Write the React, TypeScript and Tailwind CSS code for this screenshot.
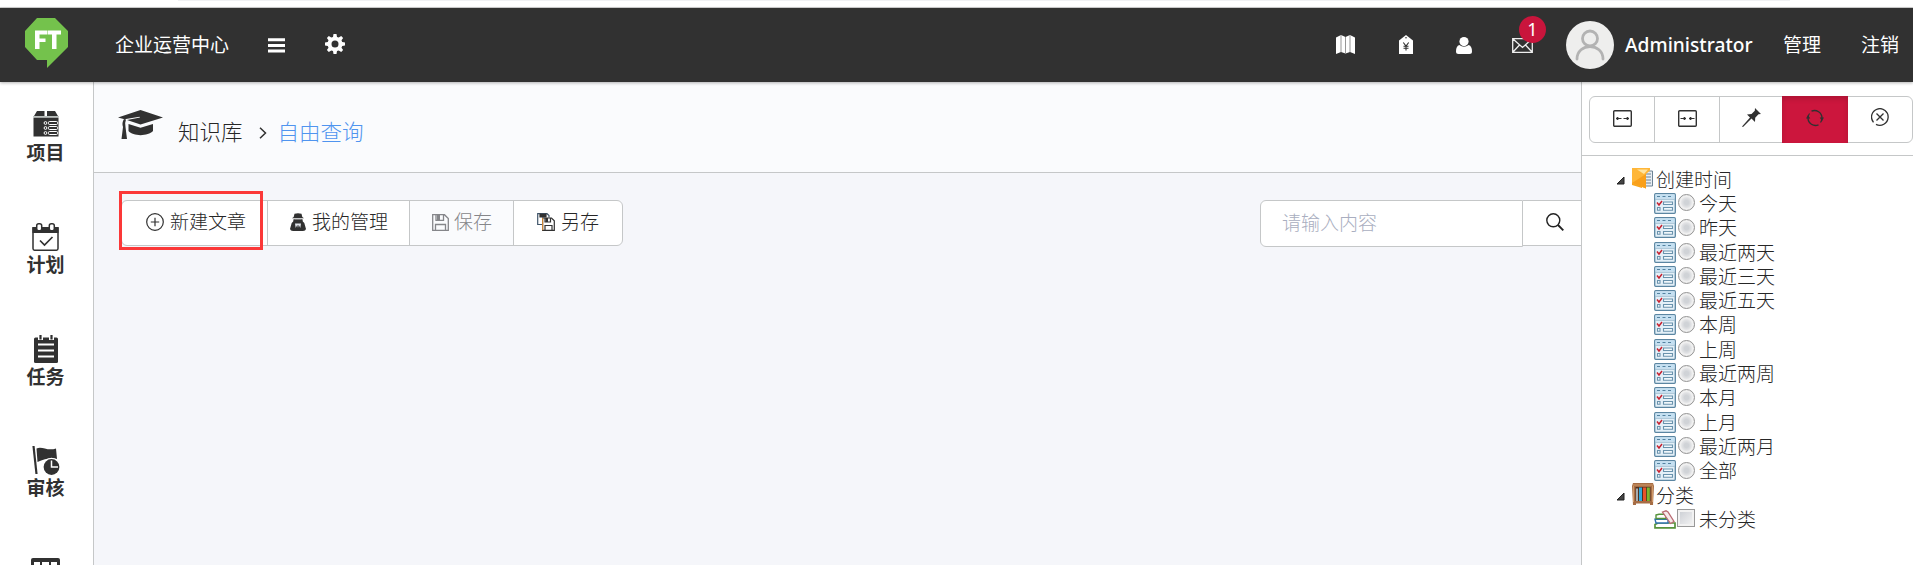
import React from 'react';

const Logo = () => (
  <svg className="h-[50px] w-[43px]" viewBox="0 0 43 50">
    <path d="M12 0H30L43 13V29L30 42L22 50V42H12L0 29V13Z" fill="#74c24c" />
    <path d="M10 12.500H22V16.500H14.500V20.500H20.500V24H14.500V31H10Z M22.500 12.500H36V16.500H31.500V31H27V16.500H22.500Z" fill="#fff" />
  </svg>
);

const Menu = () => (
  <svg className="h-[15px] w-[17px]" viewBox="0 0 17 15" stroke="#fff" strokeWidth="3">
    <path d="M0 1.700H17M0 7.400H17M0 13.100H17" />
  </svg>
);

const Gear = () => (
  <svg className="size-[20px]" viewBox="0 0 20 20">
    <path
      fill="#fff"
      fillRule="evenodd"
      d="M8.500 0H11.500L12 2.900L13.700 3.600L16.200 2L18.100 3.900L16.500 6.300L17.200 8L20 8.500V11.500L17.200 12L16.500 13.700L18.100 16.100L16.200 18L13.700 16.400L12 17.100L11.500 20H8.500L8 17.100L6.300 16.400L3.800 18L1.900 16.100L3.500 13.700L2.800 12L0 11.500V8.500L2.800 8L3.500 6.300L1.900 3.900L3.800 2L6.300 3.600L8 2.900ZM10 6.500A3.500 3.500 0 1 0 10 13.500A3.500 3.500 0 1 0 10 6.500Z"
    />
  </svg>
);

const MapIcon = () => (
  <svg className="h-[19px] w-[19px]" viewBox="0 0 19 19">
    <path d="M0 2.500L5 0L9.500 2L14 0L19 2.500V19L14 17L9.500 18.500L5 17L0 19Z" fill="#fff" />
    <path d="M5 0V17M9.500 2V18.500M14 0V17" stroke="#8a8a8a" strokeWidth=".9" />
  </svg>
);

const Tag = () => (
  <svg className="h-[19px] w-[14px]" viewBox="0 0 14 19">
    <path d="M7 0L14 5.500V19H0V5.500Z" fill="#fff" />
    <circle cx="7" cy="2.800" r="0.800" fill="#313131" />
    <path d="M4.300 7.500L7 11L9.700 7.500M7 11V15.500M4.500 11.300H9.500M4.500 13.300H9.500" fill="none" stroke="#313131" strokeWidth="1.100" />
  </svg>
);

const User = () => (
  <svg className="h-[17px] w-[16px]" viewBox="0 0 16 17" fill="#fff">
    <circle cx="8" cy="4.600" r="4.600" />
    <path d="M3.300 8Q8 11.500 12.700 8Q16 9 16 14.500Q16 17 13.500 17H2.500Q0 17 0 14.500Q0 9 3.300 8Z" />
  </svg>
);

const Mail = () => (
  <svg className="h-[15px] w-[21px]" viewBox="0 0 21 15" fill="none" stroke="#eee" strokeWidth="1.300">
    <path d="M.7.700H20.300V14.300H.700ZM1 1L10.500 9.500L20 1M1 14L7.500 7M20 14L13.500 7" />
  </svg>
);

const Avatar = () => (
  <svg className="size-[48px]" viewBox="0 0 48 48">
    <circle cx="24" cy="24" r="24" fill="#eeeeed" />
    <g fill="none" stroke="#b3b3b3" strokeWidth="2.800" strokeLinecap="round">
      <circle cx="24" cy="17.500" r="7.500" />
      <path d="M11 38C11 21.500 37 21.500 37 38" />
    </g>
  </svg>
);

const ProjectIcon = () => (
  <svg className="h-[26px] w-[26px]" viewBox="0 0 26 26">
    <path d="M4 0H11.500V5H1ZM14 0H22L25 5H14ZM.500 6.500H25.500V25.500H.500Z" fill="#313131" />
    <path d="M0 5.700H26" stroke="#b9bfbc" strokeWidth="1.300" />
    <g fill="none" stroke="#fff" strokeWidth="1">
      <rect x="15.500" y="10.500" width="9" height="3" rx="1" />
      <rect x="15.500" y="15.500" width="9" height="3" rx="1" />
      <rect x="15.500" y="20.500" width="9" height="3" rx="1" />
      <circle cx="12.500" cy="12" r="1.400" />
      <circle cx="12.500" cy="17" r="1.400" />
      <circle cx="12.500" cy="22" r="1.400" />
    </g>
  </svg>
);

const PlanIcon = () => (
  <svg className="h-[28px] w-[27px]" viewBox="0 0 27 28">
    <path d="M1 5H26V25.500Q26 27.200 24.500 27.200H2.500Q1 27.200 1 25.500Z" fill="#fff" stroke="#313131" strokeWidth="1.500" />
    <path d="M.500 4H26.500V10H.500Z" fill="#313131" />
    <rect x="4.700" y=".800" width="5" height="7" rx="2" fill="#fff" stroke="#313131" strokeWidth="1.500" />
    <rect x="17.300" y=".800" width="5" height="7" rx="2" fill="#fff" stroke="#313131" strokeWidth="1.500" />
    <path d="M8 17.500L12.500 22L20.500 14" fill="none" stroke="#313131" strokeWidth="1.700" />
  </svg>
);

const TaskIcon = () => (
  <svg className="h-[28px] w-[24px]" viewBox="0 0 24 28">
    <path d="M1.500 2.500H22.500Q24 2.500 24 4V26.500Q24 28 22.500 28H1.500Q0 28 0 26.500V4Q0 2.500 1.500 2.500Z" fill="#313131" />
    <path d="M6.500 0V5M17.500 0V5" stroke="#fff" strokeWidth="5" />
    <path d="M6.500 0V4.500M17.500 0V4.500" stroke="#313131" strokeWidth="2.200" />
    <path d="M4 9.500H20M4 15.500H20M4 21.500H20" stroke="#fff" strokeWidth="1.800" />
  </svg>
);

const ReviewIcon = () => (
  <svg className="h-[29px] w-[28px]" viewBox="0 0 28 29">
    <path d="M1.500 0L4.500 28" stroke="#313131" strokeWidth="2.200" />
    <path d="M4.500 2.500C10 -.5 15 5.500 24 2.500L25 13C20 11 12 13 5.500 16Z" fill="#313131" />
    <circle cx="19.500" cy="21" r="9.200" fill="#fff" />
    <circle cx="19.500" cy="21" r="7.900" fill="#313131" />
    <path d="M19.500 14.500V21H26" fill="none" stroke="#fff" strokeWidth="1.500" />
  </svg>
);

const TableIcon = () => (
  <svg className="h-[26px] w-[29px]" viewBox="0 0 29 26">
    <rect width="29" height="26" rx="2" fill="#313131" />
    <path d="M3 4H9V8H3ZM11 4H18V8H11ZM20 4H26V8H20Z" fill="#fff" />
  </svg>
);

const Cap = () => (
  <svg className="h-[30px] w-[45px]" viewBox="0 0 45 30" fill="#313131">
    <path d="M22.500 0L45 7.500L22.500 14.500L9 10L22 7.500L21.500 6.700L6.500 9.300L0 7.500Z" />
    <path d="M10.500 14L22.500 17.800L35 14V21C30 26.500 15 26.500 10.500 21Z" />
    <path d="M6 9L8 9.500Q6.500 13 7.500 17L9 29H3.500L5 17Q3.500 13 6 9Z" />
  </svg>
);

const PlusCircle = () => (
  <svg className="size-[18px]" viewBox="0 0 18 18" fill="none" stroke="#313131" strokeWidth="1.200">
    <circle cx="9" cy="9" r="8.300" />
    <path d="M9 4.800V13.200M4.800 9H13.200" />
  </svg>
);

const Manager = () => (
  <svg className="h-[18px] w-[16px]" viewBox="0 0 16 18">
    <path d="M4.500 .8Q8 -.4 11.500 .8L12.300 4L14 5.200H2L3.700 4ZM3.500 6.300H12.500L12.800 8.500L14.300 10L16 16Q15.500 18 13 18H3Q.500 18 0 16L1.700 10L3.200 8.500Z" fill="#313131" />
    <path d="M5 5.700H11" stroke="#c8cacd" />
    <path d="M5 10.500L11 10.500L10.300 15L8.700 11.800L8 15L7.300 11.800L5.700 15Z" fill="#e4e8ee" />
  </svg>
);

const Save = () => (
  <svg className="size-[17px]" viewBox="0 0 17 17" fill="none" stroke="#85868a" strokeWidth="1.300">
    <path d="M.700.700H12.500L16.300 4.500V16.300H.700ZM4 .7V6.300H11.500V.7M3.500 16V10.500H13.500V16" />
    <path d="M5 1H8V6H5Z" fill="#85868a" stroke="none" />
  </svg>
);

const SaveAs = () => (
  <svg className="size-[18px]" viewBox="0 0 18 18" fill="none" stroke="#313131" strokeWidth="1.200">
    <path d="M5 11.500H.700V.700H10L12 2.500V4.500" stroke="#40556a" />
    <path d="M3 .7V4H9V.7" fill="#313131" />
    <path d="M5.600 5H14.500L17.300 7.800V17.300H5.600Z" fill="#fff" />
    <path d="M5.600 5V17.300" stroke="#c98234" />
    <path d="M8 5V9H13.500V5" />
    <path d="M8.500 5H11V9H8.500Z" fill="#313131" stroke="none" />
    <path d="M8 17V12.500H15V17" />
  </svg>
);

const Search = () => (
  <svg className="size-[18px]" viewBox="0 0 18 18" fill="none" stroke="#222" strokeWidth="1.400">
    <circle cx="7.300" cy="7.300" r="6.500" />
    <path d="M12 12L17.300 17.300" strokeWidth="1.900" />
  </svg>
);

const Spread = ({ inward }: { inward?: boolean }) => (
  <svg className="h-[17px] w-[19px]" viewBox="0 0 19 17" fill="none" stroke="#313131" strokeWidth="1.400">
    <rect x=".7" y=".7" width="17.600" height="15.600" rx="1" />
    {inward ? (
      <path d="M2.500 8.500H7.500M6 7.300L8 8.500L6 9.700ZM16.500 8.500H11.500M13 7.300L11 8.500L13 9.700Z" strokeWidth="1" fill="#313131" />
    ) : (
      <path d="M3.500 8.500H8.500M5 7.300L3 8.500L5 9.700ZM15.500 8.500H10.500M14 7.300L16 8.500L14 9.700Z" strokeWidth="1" fill="#313131" />
    )}
  </svg>
);

const Pin = () => (
  <svg className="size-[19px]" viewBox="0 0 19 19" fill="#313131">
    <path d="M13 0L19 6L16.500 6.300L13.200 9.800L13 14L9.500 10.500L1 19L0 18.500L8 9.500L5 6.500L9.500 6L12.800 2.800Z" />
  </svg>
);

const Refresh = () => (
  <svg className="size-[18px]" viewBox="0 0 18 18">
    <path d="M5.500 2.200A7.500 7.500 0 0 1 16 9M12.500 15.800A7.500 7.500 0 0 1 2 9" fill="none" stroke="#313131" strokeWidth="1.400" />
    <path d="M2 9A7.500 7.500 0 0 1 3.500 4.500M16 9A7.500 7.500 0 0 1 14.500 13.500" fill="none" stroke="#313131" strokeWidth="1.200" />
    <path d="M13.700 8.500H18L16 12ZM0 9.500H4.300L2 6Z" fill="#313131" />
  </svg>
);

const Close = () => (
  <svg className="size-[18px]" viewBox="0 0 18 18" fill="none" stroke="#313131" strokeWidth="1.300">
    <path d="M2.500 14.300A8.300 8.300 0 1 1 5 16.300M5.500 5.500L12.500 12.500M12.500 5.500L5.500 12.500" />
  </svg>
);

const Folder = () => (
  <svg className="h-[21px] w-[21px]" viewBox="0 0 21 21">
    <path d="M0 0H17V4H21V18H10V20L0 17Z" fill="#f7a51d" />
    <path d="M12 3H20.500V18H12Z" fill="#e8edf2" stroke="#6d8394" />
    <path d="M14 6H19M14 9H19M14 12H19M14 15H19" stroke="#6d8394" />
    <path d="M0 0H18V2.500L14 6V20.500L0 15Z" fill="#ffb638" />
    <path d="M0 15L14 6V20.500Z" fill="#f9a01b" />
    <path d="M5 1.500H16L12 6Z" fill="#ffe3a0" />
  </svg>
);

const FormIcon = () => (
  <svg className="h-[21px] w-[22px]" viewBox="0 0 22 21">
    <rect x=".7" y=".7" width="20.600" height="19.600" rx="1" fill="#e4f0f8" stroke="#5b86a2" strokeWidth="1.300" />
    <path d="M1.400 1.400H20.600V5.500H1.400Z" fill="#c4e0f2" />
    <path d="M3 3.500H6M8.500 3.500H11.500M14 3.500H17" stroke="#55829f" strokeWidth="1.200" />
    <path d="M1.400 6.300H20.600" stroke="#8fb2c8" strokeWidth=".8" />
    <path d="M9.500 9H18.500V11.500H9.500ZM9.500 14.500H18.500V17.300H9.500ZM3.500 14.500H6V17.300H3.500Z" fill="#f2f8fc" stroke="#6a93ad" strokeWidth="1.100" />
    <path d="M3 9.500L5 12L8 8" fill="none" stroke="#c8202f" strokeWidth="1.500" />
  </svg>
);

const Bookcase = () => (
  <svg className="h-[22px] w-[22px]" viewBox="0 0 22 22">
    <path d="M1 0H21L22 3L21 22H18V20.500H4V22H1L0 3Z" fill="#a66d45" />
    <path d="M1 2H21M1.500 3V19M20.500 3V19" stroke="#d09a69" />
    <path d="M3.500 4H18.500V18H3.500Z" fill="#50311f" />
    <path d="M5 5.500V18" stroke="#a8adb0" strokeWidth="2" />
    <path d="M8.500 4.500V18" stroke="#32a9dc" strokeWidth="3" />
    <path d="M12.500 4.500V18" stroke="#e8512c" strokeWidth="3" />
    <path d="M16.300 4.500V18" stroke="#7bb62d" strokeWidth="3" />
  </svg>
);

const Books = () => (
  <svg className="h-[19px] w-[22px]" viewBox="0 0 22 19">
    <path d="M1 14.500L4 13H21V17.800H1Z" fill="#fff" stroke="#56933b" strokeWidth="1.700" />
    <path d="M1 9.300H14V13H2Z" fill="#fff" stroke="#2e72b0" strokeWidth="1.400" />
    <path d="M2 5L5 4.300H12V8.500H2Z" fill="#fff" stroke="#56933b" strokeWidth="1.400" />
    <path d="M8.500 2L12 .8L14 2L20 11.500L16.500 13.500Z" fill="#f7e9ea" stroke="#b96a72" strokeWidth="1.300" />
  </svg>
);

const Caret = () => (
  <svg className="h-[9px] w-[9px]" viewBox="0 0 9 9">
    <path d="M8 1V8H1Z" fill="#444" stroke="#222" />
  </svg>
);

const sidebar: { label?: string; icon: React.ReactNode }[] = [
  { label: '项目', icon: <ProjectIcon /> },
  { label: '计划', icon: <PlanIcon /> },
  { label: '任务', icon: <TaskIcon /> },
  { label: '审核', icon: <ReviewIcon /> },
  { icon: <TableIcon /> },
];

const periods = ['今天', '昨天', '最近两天', '最近三天', '最近五天', '本周', '上周', '最近两周', '本月', '上月', '最近两月', '全部'];

const Header = () => (
  <header className="relative z-10 flex h-[74px] shrink-0 items-center bg-[#313131] text-[19px] leading-none text-white shadow-[0_1px_3px_rgba(0,0,0,0.3)]">
    <div className="mb-[-4px] ml-[25px] h-[58px]"><Logo /></div>
    <span className="ml-[47px] w-[114px] whitespace-nowrap">企业运营中心</span>
    <span className="ml-[39px]"><Menu /></span>
    <span className="ml-[40px] pb-[3px]"><Gear /></span>
    <div className="ml-auto flex items-center">
      <span className="w-[63px] pb-[2px]"><MapIcon /></span>
      <span className="w-[57px] pb-[2px]"><Tag /></span>
      <span className="w-[56px]"><User /></span>
      <span className="relative w-[54px]">
        <Mail />
        <span className="absolute top-[-22px] left-[7px] flex size-[27px] items-center justify-center rounded-full bg-[#c9153c] text-[18px] font-normal">1</span>
      </span>
      <Avatar />
      <span className="ml-[11px] w-[158px] text-[19.200px] font-medium">Administrator</span>
      <span className="w-[78px]">管理</span>
      <span className="w-[52px]">注销</span>
    </div>
  </header>
);

const toolButton = 'flex items-center gap-[6px] border-[#c5c7c8] border-r whitespace-nowrap pb-[2px]';

const Toolbar = () => (
  <div className="relative ml-[27px] flex h-[46px] w-[502px] rounded-[6px] border border-[#c5c7c8] bg-white">
    <button className={`${toolButton} w-[146px] pl-[24px]`}><PlusCircle />新建文章</button>
    <button className={`${toolButton} w-[142px] pl-[22px]`}><Manager />我的管理</button>
    <button className={`${toolButton} w-[104px] bg-[#fafbfd] pl-[22px] text-[#85868a]`}><Save /><span className="-ml-px">保存</span></button>
    <button className="flex items-center gap-[6px] pb-[2px] pl-[23px] whitespace-nowrap"><SaveAs />另存</button>
    <div className="absolute -top-[10px] -left-[3px] h-[59px] w-[144px] border-[3px] border-[#fb3838]" />
  </div>
);

const TreeGroup = ({ label, icon }: { label: string; icon: React.ReactNode }) => (
  <div className="flex h-[24.300px] items-center pl-[34px]">
    <Caret />
    <span className="mr-[2px] ml-[7px] w-[22px] pb-[4px]">{icon}</span>
    {label}
  </div>
);

const Panel = () => (
  <aside className="w-[332px] shrink-0 border-l border-[#c5c7c8] bg-white">
    <div className="flex h-[74px] items-start border-b border-[#c5c7c8] pt-[14px] pl-[7px]">
      <div className="flex h-[47px] w-[324px] rounded-[6px] border border-[#c5c7c8]">
        <span className="flex w-[65px] justify-center border-r border-[#c5c7c8] pt-[13px] pl-px"><Spread /></span>
        <span className="flex w-[65px] justify-center border-r border-[#c5c7c8] pt-[13px]"><Spread inward /></span>
        <span className="flex w-[62px] justify-center pt-[11px]"><Pin /></span>
        <span className="-my-px flex w-[66px] justify-center bg-[#cc163d] pt-[13px] shadow-[inset_0_3px_5px_rgba(0,0,0,0.15)]"><Refresh /></span>
        <span className="flex flex-1 justify-center pt-[11px]"><Close /></span>
      </div>
    </div>
    <div className="pt-[12px] font-light">
      <TreeGroup label="创建时间" icon={<Folder />} />
      {periods.map((p) => (
        <div key={p} className="flex h-[24.300px] items-center pl-[72px]">
          <span className="pb-[2px]"><FormIcon /></span>
          <span className="mr-[4px] mb-[3px] ml-[2px] size-[17px] rounded-full border border-[#939393] bg-[radial-gradient(circle,#d0d3d7_20%,#e2e3e5_45%,#f3f3f3_60%)] shadow-[inset_0_0_0_1px_#eee]" />
          {p}
        </div>
      ))}
      <TreeGroup label="分类" icon={<Bookcase />} />
      <div className="flex h-[24.300px] items-center pl-[72px]">
        <span className="pb-[2px]"><Books /></span>
        <span className="mr-[4px] mb-[5px] ml-[1px] size-[18px] border border-[#999] bg-linear-to-br from-[#c9ccd2] to-[#f6f6f6] shadow-[inset_0_0_0_2px_#f2f2f2]" />
        未分类
      </div>
    </div>
  </aside>
);

export default function App() {
  return (
    <div className="flex h-[565px] w-[1913px] flex-col overflow-hidden bg-white font-['Noto_Sans','Noto_Sans_CJK_SC',sans-serif] text-[19px] leading-none text-[#262626]">
      <div className="h-[8px] shrink-0 border-b border-[#d2d2d2]">
        <div className="ml-[178px] h-px w-[1612px] bg-[#f0f1f3]" />
      </div>
      <Header />
      <div className="flex min-h-0 flex-1">
        <nav className="w-[94px] shrink-0 overflow-hidden border-r border-[#c5c7c8] pt-[29px]">
          {sidebar.map(({ label, icon }, i) => (
            <div key={i} className="flex h-[111.800px] flex-col items-center pr-[2px]">
              <span className="flex h-[30px] items-start">{icon}</span>
              {label && <span className="mt-[3px] text-[19px] font-bold text-[#313131]">{label}</span>}
            </div>
          ))}
        </nav>
        <main className="min-w-0 flex-1 bg-[#f5f6fa] font-light">
          <div className="flex h-[91px] items-center border-b border-[#c5c7c8] bg-[#fafbfd] text-[21.500px]">
            <span className="ml-[24px] pb-[5px]"><Cap /></span>
            <span className="mt-[10px] ml-[15px]">知识库</span>
            <svg className="mt-[12px] ml-[16px] h-[12px] w-[8px]" viewBox="0 0 8 12" fill="none" stroke="#313131" strokeWidth="1.500"><path d="M1 .7L6.500 6L1 11.300" /></svg>
            <span className="mt-[10px] ml-[11px] text-[#4f94ef]">自由查询</span>
          </div>
          <div className="flex justify-between pt-[27px]">
            <Toolbar />
            <div className="flex items-start">
              <div className="flex h-[47px] w-[263px] items-center rounded-l-[6px] border border-[#c5c7c8] bg-white pl-[21px] text-[#a9aec0]">请输入内容</div>
              <div className="flex h-[46px] w-[58px] items-center border-y border-[#c5c7c8] bg-white pb-[2px] pl-[23px]"><Search /></div>
            </div>
          </div>
        </main>
        <Panel />
      </div>
    </div>
  );
}
